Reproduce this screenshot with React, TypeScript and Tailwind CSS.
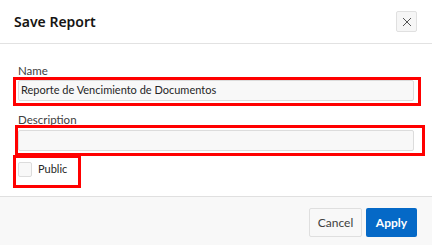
import React from "react";

export default function App() {
  const font = { fontFamily: '"Noto Sans", "Open Sans", sans-serif' };
  const body = { fontFamily: 'Lato, "Noto Sans", sans-serif' };
  return (
    <div className="relative w-[432px] h-[245px] bg-white overflow-hidden text-[#262626]" style={font}>
      <div className="flex flex-col h-full">
        {/* Header */}
        <div className="h-[44px] shrink-0 flex items-center justify-between pl-[14px] pr-[15px] border-b border-[#e2e2e2]">
          <h1 className="text-[14px] font-semibold text-[#161513]">Save Report</h1>
          <button className="w-[21px] h-[21px] flex items-center justify-center border border-[#e0e0e0] bg-[#f6f6f6] rounded-[2px]">
            <svg width="10" height="10" viewBox="0 0 10 10" fill="none" stroke="#555" strokeWidth="1">
              <path d="M1 1 L9 9 M9 1 L1 9" />
            </svg>
          </button>
        </div>
        {/* Body */}
        <div className="flex-1 px-[18px] pt-[19px]" style={body}>
          <label className="block text-[11.5px] leading-[15px] text-[#404040]">Name</label>
          <div className="mt-[2px] h-[21px] border border-[#dcdcdc] bg-[#f8f8f8] rounded-[2px] flex items-center px-[2px] text-[11px] text-[#262626]">
            Reporte de Vencimiento de Documentos
          </div>
          <label className="block mt-[11px] text-[11.5px] leading-[15px] text-[#404040]">Description</label>
          <div className="mt-[3px] h-[21px] border border-[#dcdcdc] bg-[#f8f8f8] rounded-[2px]" />
          <div className="mt-[11px] flex items-center gap-[6px] h-[15px]">
            <div className="w-[14px] h-[15px] border border-[#dcdcdc] bg-[#f8f8f8] rounded-[2px]" />
            <span className="text-[11px] text-[#262626]">Public</span>
          </div>
        </div>
        {/* Footer */}
        <div className="h-[49px] shrink-0 border-t border-[#e0e0e0] bg-[#f8f8f8] flex items-start justify-end pr-[15px] pt-[11px] gap-[4px]" style={body}>
          <button className="h-[29px] w-[53px] border border-[#dfdfdf] bg-[#f8f8f8] rounded-[2px] text-[12px] text-[#404040]">Cancel</button>
          <button className="h-[29px] w-[51px] bg-[#0569c7] rounded-[2px] text-[12px] font-bold text-white">Apply</button>
        </div>
      </div>
      {/* Annotation overlays */}
      <div className="absolute left-[13px] top-[77px] w-[408px] h-[29px] border-[3px] border-[#ff0000]" />
      <div className="absolute left-[15px] top-[125px] w-[410px] h-[31px] border-[3px] border-[#ff0000]" />
      <div className="absolute left-[13px] top-[155px] w-[68px] h-[33px] border-[3px] border-[#ff0000]" />
    </div>
  );
}
